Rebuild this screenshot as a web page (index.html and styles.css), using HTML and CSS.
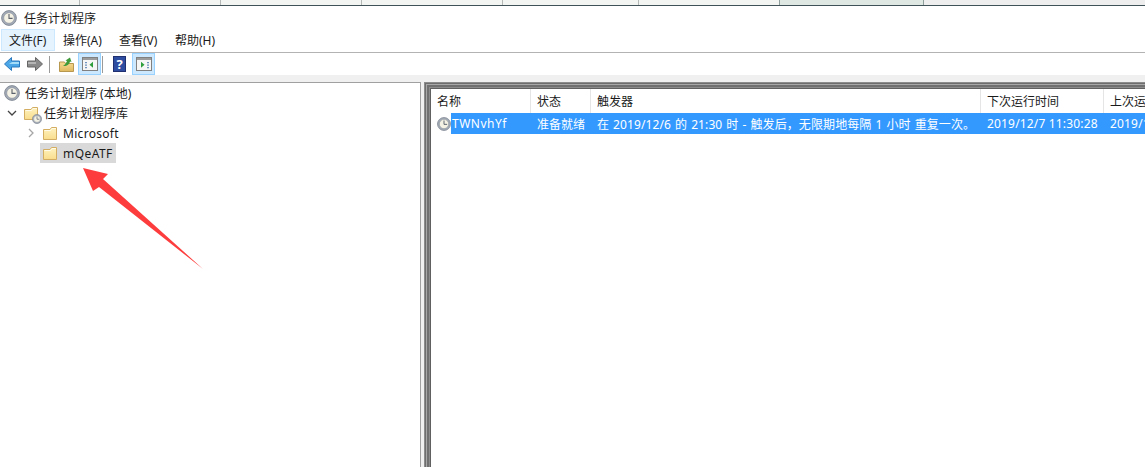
FILE: index.html
```html
<!DOCTYPE html>
<html lang="zh-CN">

<head>
    <meta charset="UTF-8">
    <title>任务计划程序</title>
    <link rel="stylesheet" href="styles.css">
</head>

<body>
    <svg class="defs" width="0" height="0">
        <defs>
            <linearGradient id="folder-fill" x1="0" y1="0" x2="0" y2="1">
                <stop offset="0" stop-color="#fff3c0" />
                <stop offset="1" stop-color="#f9dd8c" />
            </linearGradient>
            <linearGradient id="up-fill" x1="0" y1="0" x2="0" y2="1">
                <stop offset="0" stop-color="#f6dc94" />
                <stop offset="1" stop-color="#e0b860" />
            </linearGradient>
            <symbol id="clock" viewBox="0 0 16 16">
                <circle cx="8" cy="8" r="7.4" fill="#a3abb8" stroke="#767d88" stroke-width=".8" />
                <circle cx="8" cy="8" r="5.3" fill="#f4f2e4" stroke="#868d98" stroke-width=".6" />
                <path d="M8 4v4.400h3.600" fill="none" stroke="#5b626c" stroke-width="1.100" />
            </symbol>
            <symbol id="folder" viewBox="0 0 16 16">
                <path d="M1.500 14.500V4.500h6.500l1.500-2h5v12z" fill="url(#folder-fill)" stroke="#d3ae62" />
                <path d="M2.500 5.500h6l1.500-2h4" fill="none" stroke="#fffbe8" />
            </symbol>
            <symbol id="pane" viewBox="0 0 16 14">
                <rect x=".5" y=".5" width="15" height="13" fill="#f6f6f6" stroke="#808080" />
                <rect x="1" y="1" width="14" height="2" fill="#9c9c9c" />
            </symbol>
        </defs>
    </svg>

    <div class="tabs">
        <div class="tab t1"></div>
        <div class="tab t2"></div>
        <div class="tab t2"></div>
        <div class="tab t2"></div>
        <div class="tab t3"></div>
        <div class="tab t2"></div>
        <div class="tab active"></div>
    </div>

    <div class="title">
        <svg class="title-icon"><use href="#clock" /></svg>
        <span>任务计划程序</span>
    </div>

    <div class="menu">
        <div class="menu-item open">文件(F)</div>
        <div class="menu-item">操作(A)</div>
        <div class="menu-item">查看(V)</div>
        <div class="menu-item">帮助(H)</div>
    </div>

    <div class="toolbar">
        <svg class="nav-arrow" viewBox="0 0 16 14">
            <path d="M7.500.5 .5 7l7 6.500V10h8V4h-8z" fill="#4aa6e6" stroke="#2a78bd" />
            <path d="M8 5h7v2H5z" fill="#a5dcf7" />
        </svg>
        <svg class="nav-arrow next" viewBox="0 0 16 14">
            <path d="M8.500.5l7 6.500-7 6.500V10h-8V4h8z" fill="#8a8a8a" stroke="#666666" />
            <path d="M1 5h8v2H1z" fill="#b5b5b5" />
        </svg>
        <div class="sep first"></div>
        <svg class="up-icon" viewBox="0 0 15 15">
            <path d="M.5 14.500V5h5l1 1.500h8v8z" fill="url(#up-fill)" stroke="#b8974f" />
            <path d="M4 9c2-1 3-3 4-5L6.500 3.500 11 .5l1.500 4.500-1.500-.5C10.500 7 8 9.500 4 9z" fill="#3f9a3a" />
        </svg>
        <div class="tool-btn">
            <svg class="pane-icon" viewBox="0 0 16 14">
                <use href="#pane" />
                <path d="M3 5h2v1.300H3zM3 7.500h2v1.300H3zM3 10h2v1.300H3z" fill="#6f93bd" />
                <path d="M11 4.800v6L7.500 7.800z" fill="#2e9e3c" />
            </svg>
        </div>
        <div class="sep"></div>
        <div class="help-icon">?</div>
        <div class="tool-btn">
            <svg class="pane-icon" viewBox="0 0 16 14">
                <use href="#pane" />
                <path d="M11 5h2v1.300h-2zM11 7.500h2v1.300h-2zM11 10h2v1.300h-2z" fill="#6f93bd" />
                <path d="M5 4.800v6l3.500-3z" fill="#2e9e3c" />
            </svg>
        </div>
    </div>

    <div class="main">
        <div class="tree">
            <div class="tree-row root">
                <svg class="tree-icon"><use href="#clock" /></svg>
                <span>任务计划程序 (本地)</span>
            </div>
            <div class="tree-row lib">
                <svg class="chevron" viewBox="0 0 10 10"><path d="M1 3l4 4 4-4" /></svg>
                <span class="lib-icon">
                    <svg class="tree-icon"><use href="#folder" /></svg>
                    <svg class="badge"><use href="#clock" /></svg>
                </span>
                <span>任务计划程序库</span>
            </div>
            <div class="tree-row sub">
                <svg class="chevron closed" viewBox="0 0 10 10"><path d="M3 1l4 4-4 4" /></svg>
                <span class="folder-cell">
                    <svg class="tree-icon"><use href="#folder" /></svg>
                    <span class="ms">Microsoft</span>
                </span>
            </div>
            <div class="tree-row sub">
                <span class="chevron"></span>
                <span class="folder-cell selected">
                    <svg class="tree-icon"><use href="#folder" /></svg>
                    <span>mQeATF</span>
                </span>
            </div>
        </div>

        <div class="splitter"></div>

        <div class="list">
            <div class="list-head">
                <div class="col c-name">名称</div>
                <div class="col c-state">状态</div>
                <div class="col c-trigger">触发器</div>
                <div class="col c-next">下次运行时间</div>
                <div class="col c-last">上次运行时间</div>
            </div>
            <div class="list-row">
                <div class="cell c-name">
                    <svg class="row-icon"><use href="#clock" /></svg>
                    <span class="row-name">TWNvhYf</span>
                </div>
                <div class="cell c-state">准备就绪</div>
                <div class="cell c-trigger trigger-text">在 2019/12/6 的 21:30 时 - 触发后，无限期地每隔 1 小时 重复一次。</div>
                <div class="cell c-next date">2019/12/7 11:30:28</div>
                <div class="cell c-last date">2019/12/7 10:30:28</div>
            </div>
        </div>
    </div>

    <svg class="red-arrow" width="1145" height="467">
        <polygon points="83,168 108,174 103,179 203,269 99,187 93,191" fill="#fd3d3d" />
    </svg>
</body>

</html>
```
FILE: styles.css
```css
html,
body {
    margin: 0;
    height: 100%;
}

body {
    position: relative;
    width: 1145px;
    height: 467px;
    overflow: hidden;
    background-color: white;
    font-family: "Noto Sans", "Noto Sans CJK SC", sans-serif;
    font-size: 12px;
    color: #1a1a1a;
}

.defs {
    position: absolute;
}

/* strip of the window behind */
.tabs {
    display: flex;
    height: 5px;
    background-color: #eeeeee;
    border-bottom: 1px solid #3f5257;
}

.tab {
    box-sizing: border-box;
    background-color: #f3f5f3;
    border-right: 1px solid #b4b9b8;
}

.t1 {
    width: 80px;
}

.t2 {
    width: 141px;
}

.t3 {
    width: 136px;
}

.active {
    width: 145px;
    background-color: #dfe8e3;
    border-left: 1px solid #8fa09c;
    border-right: 1px solid #8fa09c;
    margin-left: -1px;
}

.title {
    display: flex;
    align-items: center;
    gap: 7px;
    height: 23px;
    padding-left: 1px;
}

.title-icon {
    width: 16px;
    height: 16px;
}

.menu {
    display: flex;
    height: 23px;
    padding-left: 1px;
    border-bottom: 1px solid #b3b3b3;
}

.menu-item {
    box-sizing: border-box;
    display: flex;
    align-items: center;
    width: 56px;
    padding-left: 8px;
    height: 22px;
}

.menu-item.open {
    width: 54px;
    background-color: #e5f3ff;
    border: 1px solid #cce8ff;
    padding-left: 7px;
}

.toolbar {
    display: flex;
    align-items: center;
    height: 22px;
    padding-left: 4px;
}

.nav-arrow {
    width: 16px;
    height: 14px;
}

.nav-arrow.next {
    margin-left: 7px;
}

.sep {
    width: 1px;
    height: 17px;
    background-color: #9a9a9a;
    margin: 0 1px;
}

.sep.first {
    margin: 0 9px 0 6px;
}

.up-icon {
    width: 15px;
    height: 15px;
    margin-right: 4px;
}

.tool-btn {
    box-sizing: border-box;
    display: flex;
    align-items: center;
    justify-content: center;
    width: 23px;
    height: 22px;
    background-color: #cce8ff;
    border: 1px solid #99d1ff;
}

.pane-icon {
    width: 16px;
    height: 14px;
}

.help-icon {
    box-sizing: border-box;
    width: 13px;
    height: 16px;
    margin: 0 6px 0 9px;
    background-color: #2f4da0;
    border: 1px solid #1f2f70;
    color: white;
    font-size: 13px;
    font-weight: bold;
    line-height: 14px;
    text-align: center;
}

.main {
    display: flex;
    height: 385px;
    margin-top: 7px;
    box-shadow: 0 -7px 0 #f0f0f0;
}

.tree {
    box-sizing: border-box;
    width: 421px;
    border-top: 1px solid #a0a0a0;
    border-right: 1px solid #a0a0a0;
}

.splitter {
    width: 3px;
    background-color: #f0f0f0;
}

.tree-row {
    display: flex;
    align-items: center;
    height: 20px;
}

.tree-icon {
    width: 16px;
    height: 16px;
}

.root {
    gap: 5px;
    padding-left: 4px;
}

.lib {
    padding-left: 7px;
}

.chevron {
    width: 10px;
    height: 10px;
    fill: none;
    stroke: #444444;
    stroke-width: 1.3;
    flex: none;
}

.chevron.closed {
    stroke: #a6a6a6;
}

.lib-icon {
    position: relative;
    display: flex;
    margin: 0 5px 0 6px;
}

.badge {
    position: absolute;
    right: -3px;
    bottom: -3px;
    width: 10px;
    height: 10px;
}

.sub {
    padding-left: 26px;
}

.folder-cell {
    display: flex;
    align-items: center;
    gap: 5px;
    height: 20px;
    margin-left: 4px;
    padding: 0 4px 0 2px;
}

.folder-cell.selected {
    padding-right: 3px;
    background-color: #d9d9d9;
    letter-spacing: .45px;
}

.ms {
    letter-spacing: .3px;
}

.list {
    box-sizing: border-box;
    flex: 1;
    min-width: 0;
    overflow: hidden;
    padding: 7px 0 0 7px;
    box-shadow: inset 1px 1px 0 #8c8c8c, inset 2px 2px 0 #6e6e6e, inset 3px 3px 0 #a8a8a8, inset 5px 5px 0 #707070, inset 6px 6px 0 #8c8c8c, inset 7px 7px 0 #606060;
}

.list-head {
    display: flex;
    height: 24px;
}

.col {
    box-sizing: border-box;
    display: flex;
    align-items: center;
    flex: none;
    padding: 0 0 1px 6px;
    border-right: 1px solid #e5e5e5;
    white-space: nowrap;
    overflow: hidden;
}

.list-row {
    display: flex;
    height: 21px;
    color: white;
    background: linear-gradient(to right, white 20px, #3399ff 20px);
}

.cell {
    box-sizing: border-box;
    display: flex;
    align-items: center;
    flex: none;
    padding-left: 6px;
    white-space: nowrap;
    overflow: hidden;
}

.c-name {
    width: 100px;
}

.c-state {
    width: 60px;
}

.c-trigger {
    width: 390px;
}

.c-next {
    width: 123px;
}

.c-last {
    width: 123px;
}

.trigger-text {
    letter-spacing: .1px;
    word-spacing: .8px;
}

.date {
    letter-spacing: .17px;
}

.row-icon {
    width: 14px;
    height: 14px;
    flex: none;
}

.row-name {
    margin-left: 1px;
    letter-spacing: .5px;
}

.red-arrow {
    position: absolute;
    left: 0;
    top: 0;
    pointer-events: none;
}
```
